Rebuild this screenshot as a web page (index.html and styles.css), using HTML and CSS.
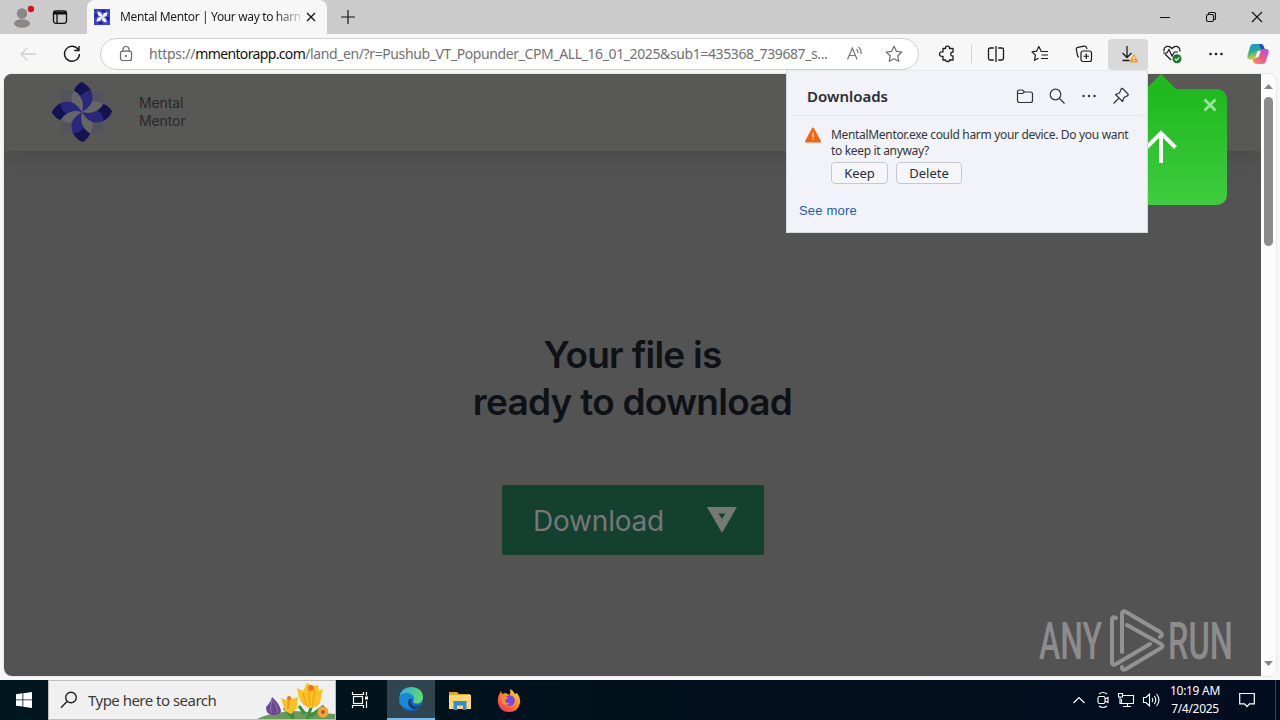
FILE: index.html
```
<!DOCTYPE html>
<html lang="en">
<head>
  <meta charset="UTF-8">
  <meta name="viewport" content="width=device-width, initial-scale=1">
  <title>Mental Mentor | Your way to harmony</title>
  <link rel="stylesheet" href="styles.css">
</head>
<body>
  <!-- Tab strip -->
  <div class="tab-strip">
    <div class="profile">
      <svg width="24" height="26" viewBox="0 0 24 26"><circle cx="12" cy="9.500" r="5.200" fill="#8b8784"/><ellipse cx="12" cy="19.500" rx="8" ry="4.200" fill="#8b8784"/><circle cx="21" cy="5" r="3.200" fill="#d50f25"/></svg>
    </div>
    <div class="tab-actions">
      <svg width="16" height="16" viewBox="0 0 16 16" fill="none" stroke="#111" stroke-width="1.300"><rect x="1.500" y="1.800" width="13" height="12.500" rx="2.500"/><path d="M1.500 4h13" stroke-width="3"/><path d="M5 5v9"/></svg>
    </div>
    <div class="tab">
      <svg class="favicon" width="16" height="16" viewBox="0 0 16 16"><rect width="16" height="16" fill="#3d3fd2"/><path id="fav1" d="M3.500 2.500Q9 3 8 8Q3 7.500 3.500 2.500z" fill="#f4f4ff"/><use href="#fav1" transform="rotate(90 8 8)"/><use href="#fav1" transform="rotate(180 8 8)"/><use href="#fav1" transform="rotate(270 8 8)"/><path d="M8 1.500l3 1M14.500 8l-1 3M8 14.500l-3-1M1.500 8l1-3" stroke="#171c91" stroke-width="2" fill="none"/></svg>
      <span class="tab-title">Mental Mentor | Your way to harn</span>
      <svg class="tab-close" width="10" height="10" viewBox="0 0 10 10" stroke="#111" stroke-width="1.300"><path d="M1 1l8 8M9 1l-8 8"/></svg>
    </div>
    <svg class="new-tab" width="14" height="14" viewBox="0 0 14 14" stroke="#111" stroke-width="1.200"><path d="M7 0v14M0 7h14"/></svg>
    <div class="window-controls">
      <span><svg width="12" height="12" viewBox="0 0 12 12" stroke="#111"><path d="M1 6.500h10"/></svg></span>
      <span><svg width="12" height="12" viewBox="0 0 12 12" fill="none" stroke="#111" stroke-width="1.100"><rect x="1.500" y="3.500" width="7" height="7" rx="1.500"/><path d="M3.500 3V2.500q0-1 1-1H9q1.500 0 1.500 1.500v4.500q0 1-1 1H9"/></svg></span>
      <span><svg width="12" height="12" viewBox="0 0 12 12" stroke="#111" stroke-width="1.100"><path d="M1 1l10 10M11 1L1 11"/></svg></span>
    </div>
  </div>

  <!-- Toolbar -->
  <div class="toolbar">
    <div class="nav-btn back"><svg width="18" height="16" viewBox="0 0 18 16" fill="none" stroke="#d0d0d0" stroke-width="1.300"><path d="M17 8H2M8.500 1.500L2 8l6.500 6.500"/></svg></div>
    <div class="nav-btn"><svg width="18" height="18" viewBox="0 0 18 18" fill="none" stroke="#1b1b1b" stroke-width="1.400"><path d="M15.500 5A7.500 7.500 0 1 0 16.500 9M16 1v4.500h-4.800"/></svg></div>
    <div class="address-bar">
      <svg class="lock" width="14" height="18" viewBox="0 0 14 18" fill="none" stroke="#666" stroke-width="1.200"><rect x="1.500" y="6.200" width="11" height="9.300" rx="2"/><path d="M4 6V4.500a3 3 0 0 1 6 0V6"/><circle cx="7" cy="11" r="1" fill="#555" stroke="none"/></svg>
      <span class="url"><span class="u1">https://</span><b>mmentorapp.com</b><span class="u2">/land_en/?r=Pushub_VT_Popunder_CPM_ALL_16_01_2025&amp;sub1=435368_739687_s...</span></span>
      <svg class="read" width="18" height="18" viewBox="0 0 18 18" fill="none" stroke="#777" stroke-width="1.200"><path d="M1.500 14.500L6.300 3l4.800 11.500M3.200 10.500h6.300M10.500 4q1.700 1.500 1.500 4M12.500 2q3 2.500 2.500 7"/></svg>
      <svg class="star" width="18" height="18" viewBox="0 0 18 18" fill="none" stroke="#6d6d6d" stroke-width="1.200" stroke-linejoin="round"><path d="M9 1.300l2.400 5 5.400.700-4 3.800 1 5.500L9 13.700l-4.800 2.600 1-5.500-4-3.800 5.400-.700z"/></svg>
    </div>
    <div class="tool puzzle"><svg width="18" height="18" viewBox="0 0 18 18" fill="none" stroke="#1b1b1b" stroke-width="1.300" stroke-linejoin="round"><path d="M5 3.500h2.500q-.300-2.300 2-2.300t2 2.300H15v3.700q-2.300-.100-2.300 1.900t2.300 1.900v4h-3.500q.200 1.500-1.900 1.500T7.500 15H5v-3.700q-3.500.500-3.500-2.200T5 6.900z"/></svg></div>
    <div class="divider"></div>
    <div class="tool split"><svg width="18" height="18" viewBox="0 0 18 18" fill="none" stroke="#1b1b1b" stroke-width="1.300"><path d="M6.800 3H3.200q-1.700 0-1.700 1.700v8.600q0 1.700 1.700 1.700h3.600M11.200 3h3.600q1.700 0 1.700 1.700v8.600q0 1.700-1.700 1.700h-3.600M9 1v16"/></svg></div>
    <div class="tool"><svg width="18" height="18" viewBox="0 0 18 18" fill="none" stroke="#1b1b1b" stroke-width="1.200" stroke-linejoin="round"><path d="M10 5.800L7.800 1.500l-2.200 4.700-4.600.600 3.400 3.300-.900 5.200 4-2.100M9.500 6.500H17M10.500 10H17M10 13.500h7"/></svg></div>
    <div class="tool"><svg width="18" height="18" viewBox="0 0 18 18" fill="none" stroke="#1b1b1b" stroke-width="1.200"><rect x="6" y="6" width="10.500" height="10.500" rx="2"/><path d="M11.250 8.500v5.500M8.500 11.250h5.500M4 12.200q-1.200-.400-1.500-1.700L1.300 4.500Q1 2.700 2.800 2.300L9 1.200q1.800-.300 2.500 1.300L12 4"/></svg></div>
    <div class="tool active"><svg width="20" height="20" viewBox="0 0 20 20" fill="none" stroke="#1b1b1b" stroke-width="1.300"><path d="M9 2v11M4.500 9L9 13.500 13.500 9M4.500 16.500h7"/><path d="M16 10.500l4 7.500h-8z" fill="#f7981d" stroke="#f7981d" stroke-linejoin="round" stroke-width=".8"/><path d="M16 12.500v2.700M16 16v1.200" stroke="#fff"/></svg></div>
    <div class="tool"><svg width="20" height="20" viewBox="0 0 20 20" fill="none" stroke="#1b1b1b" stroke-width="1.200"><path d="M9 16L3 10M2 7.500q-.500-5 3.800-5.200Q8 2.200 10 4.500q2-2.300 4.200-2.200Q18 2.600 18 7.500M1 9h4l2-3.500L10 12l2.500-4H16"/><circle cx="15" cy="14.700" r="4.500" fill="#147a22" stroke="none"/><path d="M12.800 14.700l1.600 1.600 3-3" stroke="#fff"/></svg></div>
    <div class="tool"><svg width="16" height="4" viewBox="0 0 16 4" fill="#1b1b1b"><circle cx="2.500" cy="2" r="1.300"/><circle cx="8" cy="2" r="1.300"/><circle cx="13.500" cy="2" r="1.300"/></svg></div>
    <div class="tool copilot">
      <svg width="24" height="24" viewBox="0 0 24 24">
        <defs>
          <linearGradient id="cpA" x1="0" y1="0" x2="0.300" y2="1"><stop offset="0" stop-color="#1596df"/><stop offset=".5" stop-color="#22ae9c"/><stop offset="1" stop-color="#e2cf29"/></linearGradient>
          <linearGradient id="cpB" x1="1" y1="0" x2="0" y2="1"><stop offset="0" stop-color="#a359ee"/><stop offset=".5" stop-color="#ee568b"/><stop offset="1" stop-color="#ff9a58"/></linearGradient>
        </defs>
        <path d="M7 2h8q2 0 3 3l1 3h-4q-2 0-3 3l-1.500 5q-.500 1.500-2 1.500H4q-3.500 0-2.500-4L4 5q1-3 3-3z" fill="url(#cpA)"/>
        <path d="M13 2h2q2 0 3 3l1 3h-4z" fill="#1f4fc4"/>
        <path d="M17 22H10q-2 0-3-3l-.500-2H9q2 0 3-3l1.500-5q.500-2 3-2H20q3.500 0 2.500 4L20 19q-1 3-3 3z" fill="url(#cpB)"/>
        <path d="M11.500 9h3.200l-2 6H9.500z" fill="#f7f7f7"/>
      </svg>
    </div>
  </div>

  <!-- Web page with its scrollbar -->
  <div class="viewport">
    <div class="page">
      <header class="site-header">
        <svg class="site-logo" width="60" height="62" viewBox="0 0 60 62">
          <rect x="9" y="10" width="42" height="42" rx="3" fill="#53535d"/>
          <path id="leaf" d="M22 9.500Q34 16 30 31Q14 24 22 9.500z" fill="#666664"/>
          <use href="#leaf" transform="rotate(90 30 31)"/>
          <use href="#leaf" transform="rotate(180 30 31)"/>
          <use href="#leaf" transform="rotate(270 30 31)"/>
          <g id="petal"><path d="M22 9.500Q24 4 29.500 1Q37 4 39.500 11Q44 23 30 31Q34 18 22 9.500z" fill="#29297c"/><path d="M22 9.500Q24 4 29.500 1Q36 4 38.500 9.500Q32 10 28.500 15Q26 11 22 9.500z" fill="#131350"/></g>
          <use href="#petal" transform="rotate(90 30 31)"/>
          <use href="#petal" transform="rotate(180 30 31)"/>
          <use href="#petal" transform="rotate(270 30 31)"/>
        </svg>
        <div class="site-name">Mental<br>Mentor</div>
      </header>
      <main class="site-main">
        <h1>Your file is<br><span>ready to download</span></h1>
        <div class="download-btn">
          <span>Download</span>
          <svg width="30" height="26" viewBox="0 0 30 26"><path d="M0 0h30L15 26zM11.500 6.500L15 12l3.500-5.500z" fill="#747876" fill-rule="evenodd"/></svg>
        </div>
      </main>
    </div>
    <div class="scrollbar">
      <svg width="9" height="5" viewBox="0 0 9 5"><path d="M0 5L4.500 0 9 5z" fill="#858585"/></svg>
      <div class="thumb"></div>
      <svg class="down" width="9" height="5" viewBox="0 0 9 5"><path d="M0 0h9L4.500 5z" fill="#858585"/></svg>
    </div>
  </div>

  <!-- Hint bubble pointing to the downloads button -->
  <div class="hint">
    <svg class="hint-close" width="14" height="14" viewBox="0 0 14 14" stroke="#9be39b" stroke-width="2.800"><path d="M1.500 1.500l11 11M12.500 1.500l-11 11"/></svg>
    <svg class="hint-arrow" width="34" height="36" viewBox="0 0 34 36" fill="none" stroke="#fff" stroke-width="4"><path d="M17 34V4M2.500 18.500L17 4l14.500 14.500"/></svg>
  </div>

  <!-- Downloads flyout -->
  <div class="downloads">
    <div class="downloads-head">
      <h2>Downloads</h2>
      <svg width="18" height="18" viewBox="0 0 18 18" fill="none" stroke="#333" stroke-width="1.200"><path d="M1.500 5q0-2 2-2h3l2 2h6q2 0 2 2v6.500q0 2-2 2h-11q-2 0-2-2zM1.500 6.500h4.800L8.500 5"/></svg>
      <svg width="18" height="18" viewBox="0 0 18 18" fill="none" stroke="#333" stroke-width="1.200"><circle cx="7.500" cy="7.500" r="5.300"/><path d="M11.500 11.500l5 5"/></svg>
      <svg width="18" height="18" viewBox="0 0 18 18" fill="#333"><circle cx="3.500" cy="9" r="1.200"/><circle cx="9" cy="9" r="1.200"/><circle cx="14.500" cy="9" r="1.200"/></svg>
      <svg width="18" height="18" viewBox="0 0 18 18" fill="none" stroke="#333" stroke-width="1.200" stroke-linejoin="round"><path d="M10.500 1.500l5.500 5.500q.700 1-.400 1.600L12 10.500l-1.500 4L3.500 7.500l4-1.500L9.200 2q.500-1 1.300-.500zM7 11l-5.500 5.500"/></svg>
    </div>
    <div class="downloads-item">
      <svg width="16" height="16" viewBox="0 0 16 16"><path d="M8 1.500L15 14.500H1z" fill="#f7630c" stroke="#f7630c" stroke-width="2" stroke-linejoin="round"/><path d="M8 5.500v4.700M8 11.500v1.500" stroke="#f8dfd0" stroke-width="1.500"/></svg>
      <div>
        <p><span class="line1">MentalMentor.exe could harm your device. Do you want</span><br><span class="line2">to keep it anyway?</span></p>
        <div class="buttons">
          <span class="btn keep">Keep</span>
          <span class="btn delete">Delete</span>
        </div>
      </div>
    </div>
    <a class="see-more">See more</a>
  </div>

  <!-- Watermark -->
  <svg class="watermark" width="242" height="64" viewBox="0 0 242 64">
    <g fill="#8c8c8c" font-family="Roboto, sans-serif" font-size="52" font-weight="500">
      <text x="3" y="50" textLength="63" lengthAdjust="spacingAndGlyphs">ANY</text>
      <text x="132" y="50" textLength="65" lengthAdjust="spacingAndGlyphs">RUN</text>
    </g>
    <g fill="none" stroke="#929292" stroke-width="4" stroke-linejoin="round" stroke-linecap="round">
      <path d="M80 9q-4-2-4 2v42q0 4 4 2L114 35"/>
      <path d="M86 43V5q0-4 4-2l34 20q4 3 0 5"/>
      <path d="M91 16l34 19q3 2 0 4L90 60q-4 2-4-2"/>
    </g>
  </svg>

  <!-- Taskbar -->
  <div class="taskbar">
    <div class="start"><svg width="16" height="16" viewBox="0 0 16 16" fill="#fff"><path d="M0 2.200L6.500 1.300v6.200H0zM7.300 1.200L16 0v7.500H7.300zM0 8.300h6.500v6.200L0 13.700zM7.300 8.300H16V16l-8.700-1.200z"/></svg></div>
    <div class="search">
      <svg width="18" height="18" viewBox="0 0 18 18" fill="none" stroke="#222" stroke-width="1.400"><circle cx="11" cy="6.500" r="5.300"/><path d="M7 10.500L1 16.800"/></svg>
      <span>Type here to search</span>
      <svg class="flowers" width="78" height="38" viewBox="0 0 78 38">
        <path d="M0 38Q14 31 38 30L78 33V38z" fill="#6a9a5b"/>
        <path d="M36 38L34 27M50 38L55 24M35 36l-8-9M48 33l-6-8M52 36l15-11" stroke="#3c8f3d" stroke-width="3"/>
        <path d="M15 16q-1 5-6 10 0 8 7 8 8 0 8-4-1-7-9-14z" fill="#684a91"/><path d="M15 18q-2 8-1 14M16 20q6 7 4 12" stroke="#9273b3" fill="none"/>
        <path d="M24 17l5 2 3-4 4 3 5-2-1 11-6 6-6-3z" fill="#f8c022"/><path d="M32 17l-1 11" stroke="#ee9b1d" stroke-width="2"/><circle cx="32" cy="17" r="2" fill="#e9771d"/>
        <path d="M40 7l6 3 4-8 6 3 5-1 1 6 4-2-3 14q-5 7-13 4-8-3-10-19z" fill="#fbc221"/><path d="M51 8l2 16M58 10l-3 15M46 12l4 13" stroke="#f0a81a" stroke-width="1.500"/><circle cx="54" cy="7" r="3" fill="#e9771d"/>
        <circle cx="66" cy="31" r="5.500" fill="#f3a43c"/><circle cx="66" cy="31" r="2" fill="#b9591d"/>
      </svg>
    </div>
    <div class="task"><svg width="18" height="18" viewBox="0 0 18 18" fill="none" stroke="#fff" stroke-width="1.200"><rect x="2.500" y="5.500" width="9" height="7"/><path d="M1.500 1v2.500h11V1M1.500 17v-2.500h11V17M15.500 1v3.500M15.500 10v7"/><path d="M14 5.500h3v3h-3z" fill="#fff" stroke="none"/></svg></div>
    <div class="task current">
      <svg width="26" height="26" viewBox="0 0 26 26">
        <defs><linearGradient id="edA" x1="0" y1="0.300" x2="1" y2="0.500"><stop offset="0" stop-color="#2bb0e8"/><stop offset="1" stop-color="#63dc69"/></linearGradient></defs>
        <circle cx="13" cy="13" r="12" fill="#1566b8"/>
        <path d="M1.500 11Q3 1 13.500 1 25 2 25 12q-1 6-7 5.500-4-.500-2.500-3Q17 9 11 7.500 5 6.500 1.500 11z" fill="url(#edA)"/>
        <path d="M1.500 11Q6 7 12 8q4 1.500 3.500 5-3-2-5 1-2 6 4 9-9 0-13-6z" fill="#1a8ad8"/>
        <path d="M11 13q-3 7 4 10 5 0 8-4-5 3-9 0-2-2-1-5 0-2-2-1z" fill="#123f7b"/>
      </svg>
    </div>
    <div class="task"><svg width="24" height="22" viewBox="0 0 24 22"><path d="M1 3h8l2 2h11v5H1z" fill="#e5a826"/><path d="M1 6h22v14H1z" fill="#fbd873"/><path d="M5.500 21v-9h13v9h-3.500v-4.500h-6V21z" fill="#2f8dd6"/></svg></div>
    <div class="task"><svg width="24" height="24" viewBox="0 0 24 24"><defs><linearGradient id="ffA" x1="1" y1="0" x2="0.200" y2="1"><stop offset="0" stop-color="#ffe23e"/><stop offset=".5" stop-color="#ff8b25"/><stop offset="1" stop-color="#f43162"/></linearGradient></defs><path d="M4 3l1 3 4-1 3 2q2-1 1-6 3 1 5 5l2-1q4 5 3 10-2 9-11 9T1 15Q0 9 4 3z" fill="url(#ffA)"/><circle cx="12.500" cy="12.500" r="5.300" fill="#7746df"/><path d="M5 9q3-2 6 1l-3 2q1 4 5 3-4 4-8 0z" fill="#ff8b2c"/></svg></div>
    <div class="tray">
      <svg class="chevron" width="14" height="14" viewBox="0 0 14 14" fill="none" stroke="#fff" stroke-width="1.200"><path d="M1.500 10L7 4.500l5.500 5.500"/></svg>
      <svg width="14" height="18" viewBox="0 0 14 18" fill="none" stroke="#fff" stroke-width="1.100"><rect x="2" y="5.500" width="7" height="7" rx="1.500"/><path d="M9 8l3-1.500v5L9 10M3 3q4-3 8 0M3 15q4 3 8 0"/></svg>
      <svg width="18" height="16" viewBox="0 0 18 16" fill="none" stroke="#fff" stroke-width="1.100"><path d="M6 3.500h10.500v8H4.500V7M10.500 11.500v3M6 14.500h8M1.500 1.500h4v3.500h-4zM3 5v6.500h2"/></svg>
      <svg width="18" height="16" viewBox="0 0 18 16" fill="none" stroke="#fff" stroke-width="1.100"><path d="M1.500 5.500H4L7.500 2v12L4 10.500H1.500zM10 6q1.500 2 0 4M12.300 4q3 4 0 8M14.500 2q5 6 0 12"/></svg>
      <div class="clock"><span class="time">10:19 AM</span><span class="date">7/4/2025</span></div>
      <svg class="notify" width="16" height="16" viewBox="0 0 16 16" fill="none" stroke="#fff" stroke-width="1.200"><path d="M.700 1.500h14.600v10.300H10.500L8 14.500l-2.500-2.700H.700z"/></svg>
    </div>
    <div class="show-desktop"></div>
  </div>
</body>
</html>
```
FILE: styles.css
```
/* Base Styles */
* {
  box-sizing: border-box;
}
body {
  margin: 0;
  width: 1280px;
  height: 720px;
  overflow: hidden;
  position: relative;
  display: flex;
  flex-direction: column;
  background: #f7f7f7;
  font-family: "Noto Sans", "Open Sans", sans-serif;
  color: #1b1b1b;
}
svg {
  display: block;
  flex-shrink: 0;
}
/* Tab strip */
.tab-strip {
  height: 34px;
  background: #cbcbcb;
  display: flex;
  align-items: center;
}
.profile {
  width: 24px;
  margin-left: 10px;
}
.tab-actions {
  margin: 0 19px 0 18px;
}
.tab {
  width: 240px;
  height: 34px;
  display: flex;
  align-items: center;
  padding: 0 11px 0 7px;
  background: #f7f7f7;
  border-radius: 8px 8px 0 0;
}
.tab-title {
  width: 180px;
  margin-left: 10px;
  white-space: nowrap;
  font-size: 12px;
  line-height: 18px;
  letter-spacing: -0.36px;
  mask-image: linear-gradient(to right, #000 86%, rgba(0,0,0,0.2));
}
.tab-close {
  margin-left: auto;
}
.new-tab {
  margin-left: 14px;
}
.window-controls {
  display: flex;
  margin-left: auto;
}
.window-controls span {
  width: 46px;
  display: flex;
  justify-content: center;
}
/* Toolbar */
.toolbar {
  height: 40px;
  display: flex;
  align-items: center;
}
.nav-btn {
  width: 44px;
  display: flex;
  justify-content: center;
}
.back {
  margin-left: 6px;
}
.address-bar {
  width: 819px;
  height: 32px;
  margin-left: 6px;
  padding: 0 15px 0 18px;
  display: flex;
  align-items: center;
  background: #fff;
  border: 1px solid #d0d0d0;
  border-radius: 16px;
}
.url {
  width: 680px;
  margin-left: 16px;
  font-size: 14px;
  line-height: 20px;
  white-space: nowrap;
  color: #717171;
}
.u1 {
  letter-spacing: -0.25px;
}
.url b {
  font-weight: 400;
  letter-spacing: -0.64px;
  color: #111;
}
.u2 {
  letter-spacing: -0.39px;
}
.read {
  margin-left: 17px;
}
.star {
  margin-left: auto;
}
.tool {
  width: 40px;
  height: 31px;
  margin-right: 4px;
  display: flex;
  align-items: center;
  justify-content: center;
}
.puzzle {
  margin: 0 4px 0 8px;
}
.divider {
  width: 1px;
  height: 18px;
  background: #d2d2d2;
}
.split {
  margin-left: 4px;
}
.active {
  background: #d9d9d9;
  border-radius: 4px;
}
.copilot {
  margin: 0 0 0 -2px;
}
/* Web page */
.viewport {
  height: 602px;
  margin: 0 4px;
  display: flex;
  border-radius: 8px;
  overflow: hidden;
  box-shadow: 0 0 2px rgba(0,0,0,0.2);
}
.page {
  flex: 1;
  background: #535353;
}
.site-header {
  height: 77px;
  display: flex;
  align-items: center;
  padding: 0 0 2px 48px;
  background: #585856;
  box-shadow: 0 2px 30px rgba(0,0,0,0.15);
}
.site-name {
  margin-left: 27px;
  font-family: Inter, sans-serif;
  font-size: 14px;
  line-height: 18px;
  letter-spacing: -0.1px;
  color: #28282a;
}
.site-main {
  display: flex;
  flex-direction: column;
  align-items: center;
  padding-top: 180px;
}
h1 {
  margin: 0;
  font-family: Inter, sans-serif;
  font-size: 37px;
  line-height: 47px;
  font-weight: 600;
  letter-spacing: -0.75px;
  text-align: center;
  color: #0e1216;
}
.download-btn {
  width: 262px;
  height: 70px;
  margin-top: 60px;
  margin-left: 1px;
  padding: 0 27px 0 31px;
  display: flex;
  align-items: center;
  justify-content: space-between;
  background: #144030;
  border-radius: 2px;
  font-family: Inter, sans-serif;
  font-size: 28px;
  letter-spacing: -0.2px;
  color: #747876;
}
.download-btn span {
  padding-top: 2px;
}
.scrollbar {
  width: 15px;
  padding: 10px 0 10px;
  display: flex;
  flex-direction: column;
  align-items: center;
  background: #fcfcfc;
}
.thumb {
  width: 9px;
  height: 149px;
  margin-top: 8px;
  background: #8b8b8b;
  border-radius: 5px;
}
.down {
  margin-top: auto;
}
/* Hint bubble */
.hint {
  position: absolute;
  left: 1095px;
  top: 89px;
  width: 132px;
  height: 116px;
  padding: 9px 10px;
  border-radius: 10px;
  background: linear-gradient(#1eb91e, #40cc40);
}
.hint::before {
  content: "";
  position: absolute;
  left: 50%;
  top: -15px;
  border: 16px solid transparent;
  border-top: 0;
  border-bottom: 16px solid #1eb91e;
  transform: translateX(-50%);
}
.hint-close {
  margin-left: auto;
}
.hint-arrow {
  margin: 17px auto 0;
}
/* Downloads flyout */
.downloads {
  position: absolute;
  left: 786px;
  top: 70px;
  width: 362px;
  height: 163px;
  background: #f1f3f8;
  border: 1px solid #d5d8dc;
  border-top-color: #e6e8ec;
}
.downloads-head {
  height: 45px;
  margin: 0 5px;
  padding: 6px 12px 0 15px;
  display: flex;
  align-items: center;
  gap: 14px;
  border-bottom: 1px solid #e3e6eb;
}
.downloads h2 {
  margin: 0 auto 0 0;
  font-size: 15px;
  line-height: 20px;
  font-weight: 600;
  color: #2a2d33;
}
.downloads-item {
  display: flex;
  gap: 10px;
  padding: 11px 0 0 18px;
}
.downloads-item p {
  margin: 0;
  font-size: 12px;
  line-height: 16px;
  letter-spacing: -0.32px;
  white-space: nowrap;
  color: #33363b;
}
.buttons {
  display: flex;
  gap: 8px;
  margin-top: 3px;
}
.btn {
  height: 22px;
  line-height: 20px;
  font-size: 13px;
  text-align: center;
  border: 1px solid #c5c8cd;
  border-radius: 4px;
  background: #f4f6fa;
  color: #2a2d33;
}
.keep {
  width: 57px;
}
.delete {
  width: 66px;
}
.see-more {
  display: block;
  margin: 18px 0 0 12px;
  font-family: "Liberation Sans", sans-serif;
  font-size: 13px;
  line-height: 18px;
  letter-spacing: 0.2px;
  color: #2359b5;
}
/* Watermark */
.watermark {
  position: absolute;
  left: 1036px;
  top: 609px;
}
/* Taskbar */
.taskbar {
  height: 40px;
  margin-top: 4px;
  display: flex;
  background: linear-gradient(to right, #00171f, #01101c 60%, #020c20);
}
.start, .task {
  width: 48px;
  display: flex;
  align-items: center;
  justify-content: center;
}
.search {
  width: 288px;
  padding-left: 11px;
  display: flex;
  align-items: center;
  background: #f0f0f0;
  border: 1px solid #bdbdbd;
  font-size: 15px;
  letter-spacing: -0.52px;
  color: #3a3a3a;
  overflow: hidden;
}
.search span {
  margin-left: 10px;
}
.flowers {
  margin-left: auto;
}
.task {
  margin-right: 1px;
}
.search + .task {
  margin-right: 3px;
}
.task.current {
  background: #30454f;
  border-bottom: 2px solid #76b9ed;
}
.tray {
  margin-left: auto;
  padding-right: 20px;
  display: flex;
  align-items: center;
  color: #fff;
}
.tray svg + svg {
  margin-left: 7px;
}
.tray .chevron {
  margin-right: 3px;
}
.clock {
  width: 70px;
  display: flex;
  flex-direction: column;
  text-align: center;
  font-size: 12px;
  line-height: 18px;
  letter-spacing: -0.3px;
}
.tray .notify {
  margin-left: 9px;
}
.show-desktop {
  width: 5px;
  border-left: 1px solid #3b4454;
}
```
